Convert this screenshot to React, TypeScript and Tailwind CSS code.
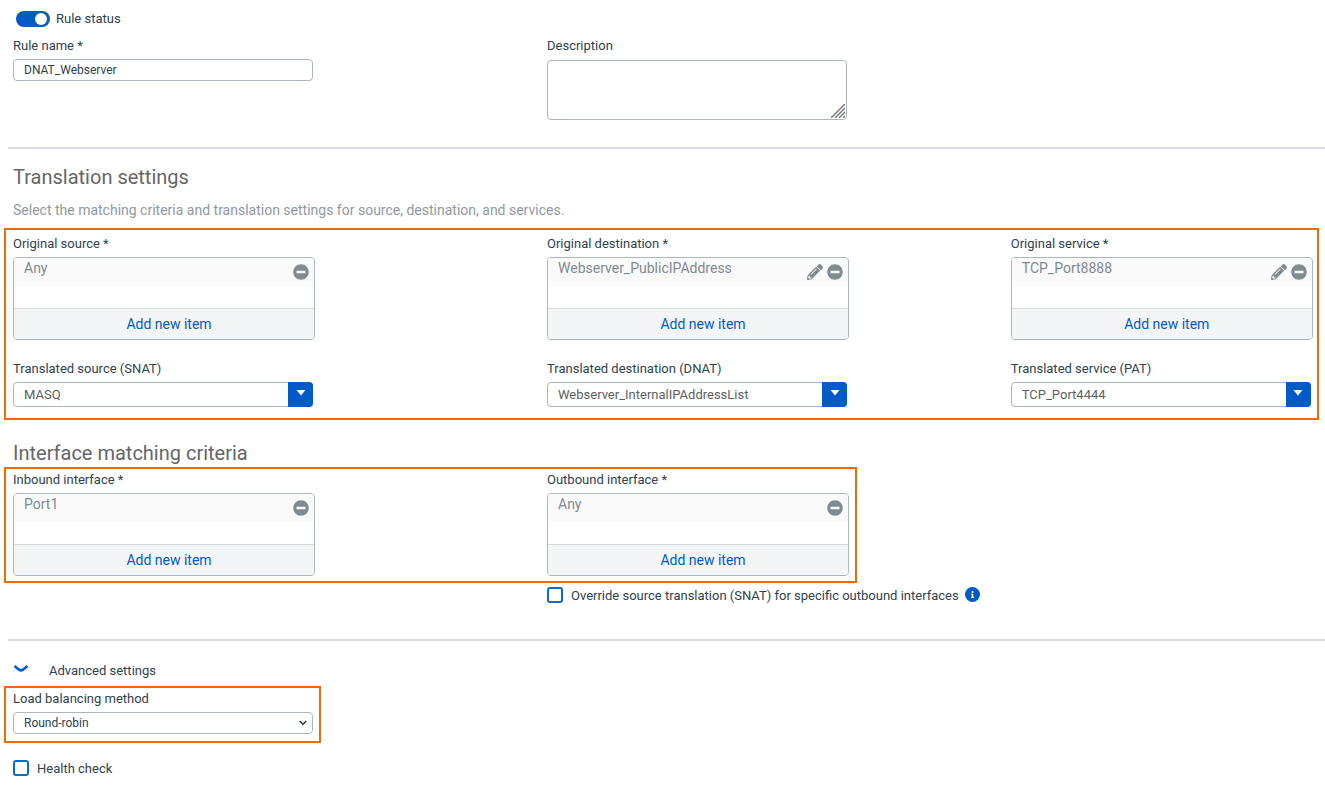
import type { ReactNode } from "react";
import { FaInfo, FaMinusCircle, FaPencilAlt } from "react-icons/fa";

const columns = "grid grid-cols-[calc(40vw+4px)_35vw_1fr]";
const label = "block text-[13px] leading-[18px] text-[#2f4250]";
const checkbox =
  "size-4 shrink-0 appearance-none rounded-[3px] border-2 border-[#0f6bc6] bg-white checked:bg-[#005bc8]";

function Highlight({ className, children }: { className: string; children: ReactNode }) {
  return <div className={`border-2 border-[#ee6b0c] pl-[7px] ${className}`}>{children}</div>;
}

function ItemList({ title, item, editable }: { title: string; item: string; editable?: boolean }) {
  return (
    <div role="group" aria-label={title}>
      <p className={label}>{title} *</p>
      <div className="mt-1 h-[83px] w-[302px] overflow-hidden rounded border border-[#adb5bd] flex flex-col">
        <div className="flex h-7 items-start justify-between bg-[#fafafa] pl-[10px] pr-[5px] text-[#7f8a91]">
          <span className="text-[14px] leading-5">{item}</span>
          <span className="flex h-7 items-center gap-1">
            {editable && (
              <button type="button" aria-label={`Edit ${item}`}>
                <FaPencilAlt size={16} />
              </button>
            )}
            <button type="button" aria-label={`Remove ${item}`}>
              <FaMinusCircle size={16} />
            </button>
          </span>
        </div>
        <button
          type="button"
          className="mt-auto h-[31px] border-t border-[#d5d8dc] bg-[#f4f5f7] pl-[10px] text-[14px] leading-5 text-[#005bc8]"
        >
          Add new item
        </button>
      </div>
    </div>
  );
}

function Dropdown({ id, title, value }: { id: string; title: string; value: string }) {
  return (
    <div className="mt-5">
      <label htmlFor={id} className={label}>{title}</label>
      <div className="relative mt-1 w-[300px]">
        <select
          id={id}
          className="block h-[25px] w-full appearance-none rounded border border-[#adb5bd] bg-white pl-[10px] text-[13px] leading-5 text-[#5c5f62]"
        >
          <option>{value}</option>
        </select>
        <span className="pointer-events-none absolute inset-y-0 right-0 flex w-[25px] justify-center rounded-r bg-[#005bc8] pt-2">
          <svg width="10" height="6" viewBox="0 0 10 6" fill="white">
            <path d="M0.5 0h9L5 5.5z" />
          </svg>
        </span>
      </div>
    </div>
  );
}

export default function App() {
  return (
    <form className="bg-white pb-3 pt-[10px] font-['Roboto',sans-serif]">
      <div className="pl-[13px] pr-3">
        <div className="flex items-center gap-[6px] pl-[3px]">
          <input
            id="status"
            type="checkbox"
            role="switch"
            defaultChecked
            className="flex h-4 w-[34px] appearance-none items-center justify-end rounded-full bg-[#005bc8] pr-[3px] before:size-3 before:rounded-full before:bg-white"
          />
          <label htmlFor="status" className={label}>Rule status</label>
        </div>
        <div className={`${columns} mt-[9px]`}>
          <div>
            <label htmlFor="name" className={label}>Rule name *</label>
            <input
              id="name"
              defaultValue="DNAT_Webserver"
              className="mt-1 block h-[22px] w-[300px] rounded border border-[#adb5bd] px-[10px] text-[12px] leading-4 text-[#2f4250]"
            />
          </div>
          <div>
            <label htmlFor="description" className={label}>Description</label>
            <div className="relative mt-[5px] w-[300px]">
              <textarea
                id="description"
                className="block h-[60px] w-full resize-none rounded border border-[#adb5bd] px-[10px] text-[12px]"
              />
              <svg className="pointer-events-none absolute bottom-0.5 right-0.5" width="14" height="14" viewBox="0 0 14 14" stroke="#777" strokeWidth="1.4">
                <path d="M0 14L14 0M4 14L14 4M8 14L14 8M12 14L14 12" />
              </svg>
            </div>
          </div>
        </div>
      </div>

      <hr className="ml-2 mt-[27px] border-t-2 border-[#d9dde1]" />

      <h2 className="ml-[13px] mt-4 text-[20px] leading-6 text-[#666]">Translation settings</h2>
      <p className="ml-[13px] mt-[11px] text-[14px] leading-5 text-[#91999f]">
        Select the matching criteria and translation settings for source, destination, and services.
      </p>
      <Highlight className="ml-1 mr-[6px] mt-2 pb-[11px] pr-1 pt-[5px]">
        <div className={columns}>
          <div>
            <ItemList title="Original source" item="Any" />
            <Dropdown id="snat" title="Translated source (SNAT)" value="MASQ" />
          </div>
          <div>
            <ItemList title="Original destination" item="Webserver_PublicIPAddress" editable />
            <Dropdown id="dnat" title="Translated destination (DNAT)" value="Webserver_InternalIPAddressList" />
          </div>
          <div>
            <ItemList title="Original service" item="TCP_Port8888" editable />
            <Dropdown id="pat" title="Translated service (PAT)" value="TCP_Port4444" />
          </div>
        </div>
      </Highlight>

      <h2 className="ml-[13px] mt-[21px] text-[20px] leading-6 text-[#666]">Interface matching criteria</h2>
      <Highlight className="ml-1 mt-0.5 w-fit pb-[5px] pr-[6px] pt-0.5">
        <div className="grid grid-cols-[calc(40vw+4px)_302px]">
          <ItemList title="Inbound interface" item="Port1" />
          <ItemList title="Outbound interface" item="Any" />
        </div>
      </Highlight>
      <div className={`${columns} mt-1 pl-[13px] pr-3`}>
        <div className="col-span-2 col-start-2 flex h-4 items-start">
          <input id="override" type="checkbox" className={checkbox} />
          <label htmlFor="override" className={`${label} ml-2`}>
            Override source translation (SNAT) for specific outbound interfaces
          </label>
          <button
            type="button"
            aria-label="More information"
            className="ml-[6px] flex size-[15px] items-center justify-center rounded-full bg-[#005bc8] text-white"
          >
            <FaInfo size={7} />
          </button>
        </div>
      </div>

      <hr className="ml-2 mt-9 border-t-2 border-[#d9dde1]" />

      <button type="button" className="ml-[13px] mt-[21px] flex items-center gap-5">
        <svg width="16" height="14" viewBox="0 0 16 14" fill="none" stroke="#005bc8" strokeWidth="2.6">
          <path d="M1.5 2L6 5.7Q8 7 10 5.7L14.5 2" />
        </svg>
        <span className={label}>Advanced settings</span>
      </button>
      <Highlight className="ml-1 mt-[6px] w-fit pb-[7px] pr-[6px] pt-0.5">
        <label htmlFor="balancing" className={label}>Load balancing method</label>
        <div className="relative mt-1 w-[300px]">
          <select
            id="balancing"
            className="block h-[22px] w-full appearance-none rounded border border-[#adb5bd] bg-white pl-[10px] text-[12px] leading-4 text-[#2f4250]"
          >
            <option>Round-robin</option>
          </select>
          <svg className="pointer-events-none absolute right-[6px] top-2" width="8" height="6" viewBox="0 0 8 6" fill="none" stroke="#2f4250" strokeWidth="1.6">
            <path d="M0.7 1L4 4.4L7.3 1" />
          </svg>
        </div>
      </Highlight>
      <div className="ml-[13px] mt-[17px] flex h-4 items-start gap-2">
        <input id="health" type="checkbox" className={checkbox} />
        <label htmlFor="health" className={label}>Health check</label>
      </div>
    </form>
  );
}
